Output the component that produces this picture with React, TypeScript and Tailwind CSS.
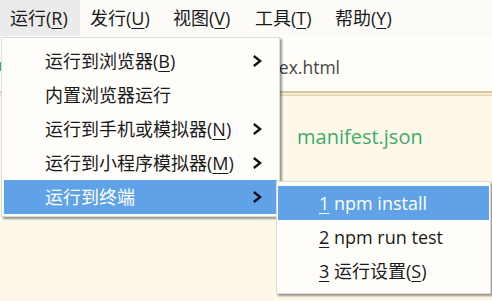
import React from "react";

const FONT = { fontFamily: '"Open Sans", "Noto Sans CJK SC", sans-serif' };

function U({ children }: { children: React.ReactNode }) {
  return <span className="underline underline-offset-[3px] decoration-1">{children}</span>;
}

function Chevron() {
  return (
    <svg width="10" height="12" viewBox="0 0 10 12" className="shrink-0">
      <polyline points="1.8,1 8.2,6 1.8,11" fill="none" stroke="#111" strokeWidth="2.3" strokeLinejoin="miter" />
    </svg>
  );
}

function MenuRow({ children, arrow, active }: { children: React.ReactNode; arrow?: boolean; active?: boolean }) {
  return (
    <div
      className={
        "h-[34px] flex items-center justify-between pl-[41px] pr-[15px] " +
        (active ? "bg-[#5fa2e8] text-white" : "text-[#1a1a1a]")
      }
    >
      <span className="leading-none">{children}</span>
      {arrow ? <Chevron /> : null}
    </div>
  );
}

export default function App() {
  const bar = [
    { t: "运行", k: "R", w: "w-[80px]", active: true },
    { t: "发行", k: "U", w: "w-[83px]" },
    { t: "视图", k: "V", w: "w-[82px]" },
    { t: "工具", k: "T", w: "w-[80px]" },
    { t: "帮助", k: "Y", w: "w-[80px]" },
  ];
  return (
    <div className="relative w-[492px] h-[301px] overflow-hidden bg-[#fdf8e7] text-[18px]" style={FONT}>
      {/* menu bar */}
      <div className="h-[37px] flex bg-[#fcfbf7] text-[#1a1a1a]">
        {bar.map((b) => (
          <div
            key={b.t}
            className={"h-[36px] flex items-center pl-[10px] " + b.w + (b.active ? " bg-[#ebebeb]" : "")}
          >
            {b.t}(<U>{b.k}</U>)
          </div>
        ))}
      </div>
      {/* tab bar */}
      <div className="relative h-[54px] bg-[#fffdf8] flex items-center pl-[200px]">
        <div className="absolute left-0 top-[25px] w-[2px] h-[9px] bg-[#2fb36b]" />
        <span className="text-[17.5px] text-[#454545] pl-[53px] pt-[6px]">index.html</span>
      </div>
      <div className="h-[2px] bg-[#dccb9d]" />
      <div className="h-[2px] bg-[#f3ebd3]" />
      <div className="h-[1px] bg-[#e2d4ab]" />
      {/* editor */}
      <div className="pl-[297px] pt-[26px]">
        <span className="text-[20px] text-[#3dab6a]">manifest.json</span>
      </div>

      {/* main dropdown */}
      <div className="absolute left-[1px] top-[37px] w-[279px] bg-[#fffdf9] border border-[#dcdcdc] px-[2px] pt-[6px] pb-[2px] shadow-[2px_2px_2px_rgba(0,0,0,0.4)]">
        <MenuRow arrow>
          运行到浏览器(<U>B</U>)
        </MenuRow>
        <MenuRow>内置浏览器运行</MenuRow>
        <MenuRow arrow>
          运行到手机或模拟器(<U>N</U>)
        </MenuRow>
        <MenuRow arrow>
          运行到小程序模拟器(<U>M</U>)
        </MenuRow>
        <MenuRow arrow active>
          运行到终端
        </MenuRow>
      </div>

      {/* submenu */}
      <div className="absolute left-[276px] top-[181px] w-[215px] bg-[#fffdf9] border border-[#dcdcdc] px-[1px] pt-[4px] pb-[5px] shadow-[2px_2px_2px_rgba(0,0,0,0.4)]">
        <MenuRow active>
          <U>1</U> npm install
        </MenuRow>
        <MenuRow>
          <U>2</U> npm run test
        </MenuRow>
        <MenuRow>
          <U>3</U> 运行设置(<U>S</U>)
        </MenuRow>
      </div>
    </div>
  );
}
